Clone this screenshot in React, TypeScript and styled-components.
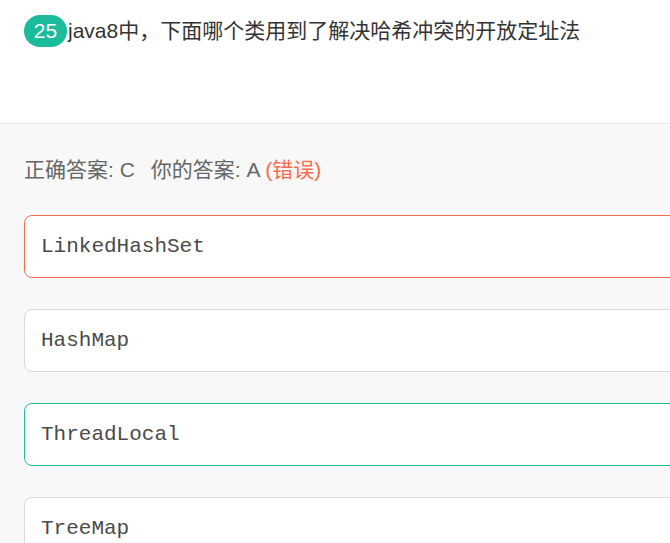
import React from 'react';
import styled, { createGlobalStyle } from 'styled-components';

const GlobalStyle = createGlobalStyle`
  html, body {
    margin: 0;
    padding: 0;
    overflow: hidden;
    background: #f8f8f8;
  }
  body {
    font-family: 'Liberation Sans', 'Noto Sans CJK SC', sans-serif;
  }
`;

const Page = styled.div`
  width: 720px;
  min-height: 543px;
  background: #f8f8f8;
`;

const Header = styled.header`
  height: 124px;
  box-sizing: border-box;
  padding: 15px 24px 0;
  background: #ffffff;
  border-bottom: 1px solid #ebebeb;
`;

const TitleRow = styled.div`
  display: flex;
  align-items: center;
`;

const Badge = styled.span`
  display: inline-flex;
  align-items: center;
  justify-content: center;
  height: 32px;
  min-width: 43px;
  padding: 0 4px;
  box-sizing: border-box;
  border-radius: 16px;
  background: #1abc9c;
  color: #ffffff;
  font-size: 21px;
`;

const Title = styled.h1`
  margin: 0 0 0 1px;
  font-size: 21px;
  font-weight: normal;
  line-height: 32px;
  color: #333333;
`;

const Body = styled.section`
  padding: 31px 0 0 24px;
`;

const AnswerLine = styled.div`
  font-size: 21px;
  line-height: 30px;
  color: #666666;
  margin-bottom: 30px;
`;

const AnswerPart = styled.span`
  margin-right: 16px;
`;

const Verdict = styled.span<{ $ok: boolean }>`
  color: ${(p) => (p.$ok ? '#1abc9c' : '#f76b4f')};
`;

const OptionList = styled.ul`
  list-style: none;
  margin: 0;
  padding: 0;
  display: flex;
  flex-direction: column;
  gap: 31px;
`;

type OptionState = 'wrong' | 'right' | 'none';

const borderColor = {
  wrong: '#f76b4f',
  right: '#1abc9c',
  none: '#d9d9d9',
};

const OptionItem = styled.li<{ $state: OptionState }>`
  display: flex;
  align-items: center;
  height: 63px;
  box-sizing: border-box;
  padding: 0 16px;
  background: #ffffff;
  border: 1px solid ${(p) => borderColor[p.$state]};
  border-radius: 8px;
  font-family: 'Liberation Mono', 'Courier New', monospace;
  font-size: 21px;
  color: #4a4a4a;
`;

const options: { label: string; state: OptionState }[] = [
  { label: 'LinkedHashSet', state: 'wrong' },
  { label: 'HashMap', state: 'none' },
  { label: 'ThreadLocal', state: 'right' },
  { label: 'TreeMap', state: 'none' },
];

export default function App() {
  return (
    <Page>
      <GlobalStyle />
      <Header>
        <TitleRow>
          <Badge>25</Badge>
          <Title>java8中，下面哪个类用到了解决哈希冲突的开放定址法</Title>
        </TitleRow>
      </Header>
      <Body>
        <AnswerLine>
          <AnswerPart>正确答案: C</AnswerPart>
          你的答案: A <Verdict $ok={false}>(错误)</Verdict>
        </AnswerLine>
        <OptionList>
          {options.map((o) => (
            <OptionItem key={o.label} $state={o.state}>
              {o.label}
            </OptionItem>
          ))}
        </OptionList>
      </Body>
    </Page>
  );
}
